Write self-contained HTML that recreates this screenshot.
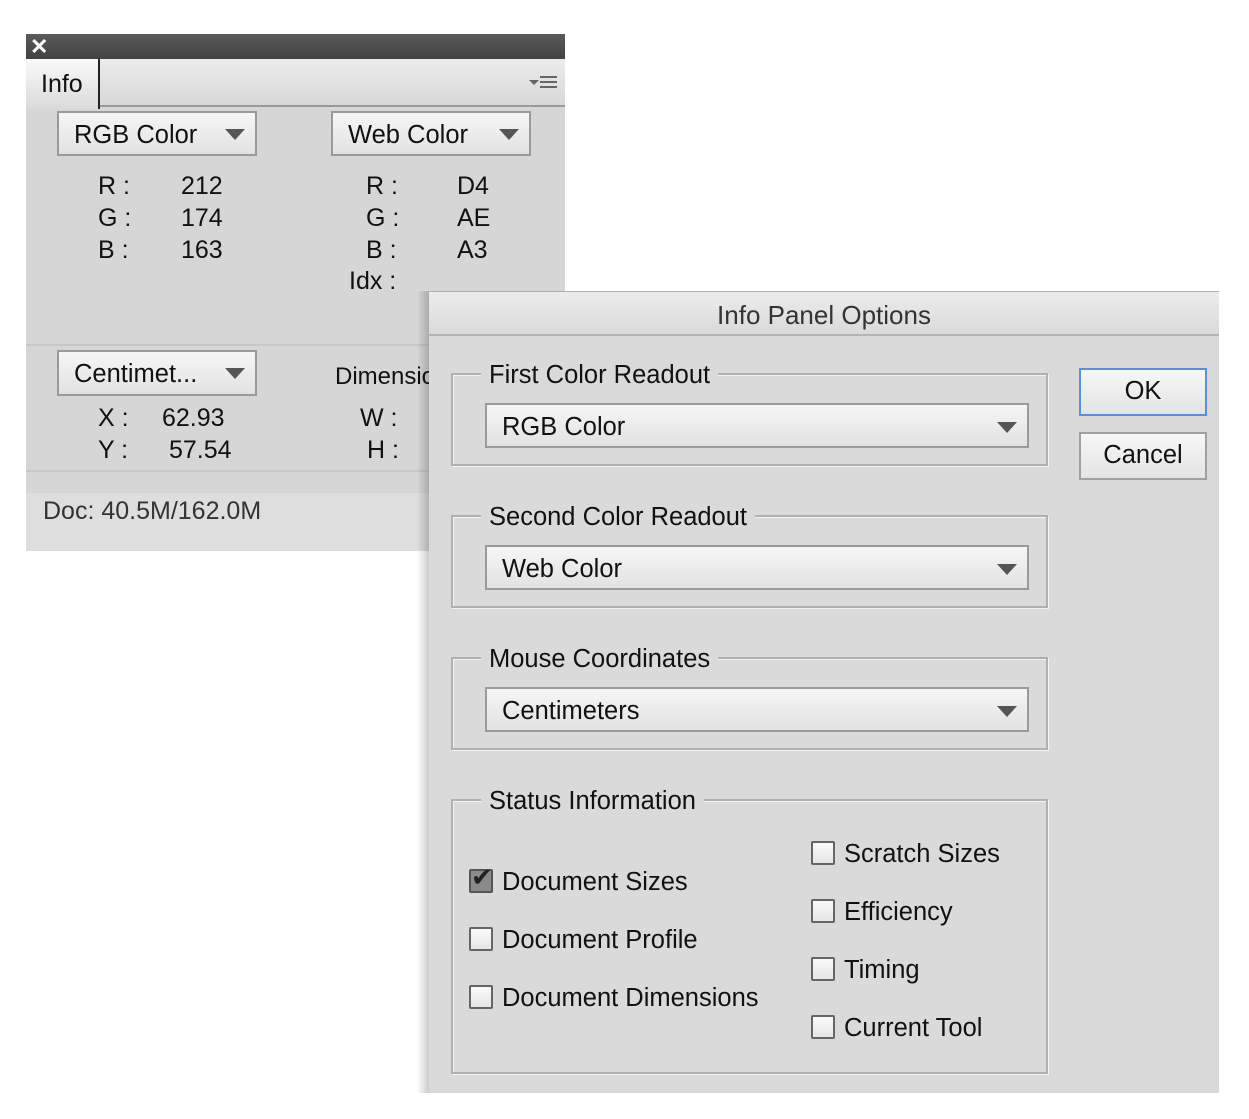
<!DOCTYPE html>
<html><head><meta charset="utf-8"><style>
*{margin:0;padding:0;box-sizing:border-box}
body{width:1249px;height:1119px;background:#fff;position:relative;overflow:hidden;font-family:"Liberation Sans",sans-serif;color:#111}
.a{position:absolute;white-space:nowrap}
.t{font-size:25px;line-height:28px}
.dd{position:absolute;border:2px solid #9a9a9a;background:linear-gradient(#f6f6f6,#e2e2e2)}
.dd span{position:absolute;left:15px;top:8px;font-size:25.5px;line-height:28px}
.tri{position:absolute;width:0;height:0;border-left:10px solid transparent;border-right:10px solid transparent;border-top:11px solid #555}
.grp{position:absolute;border:2px solid #b0b0b0;box-shadow:inset 1px 1px 0 #f4f4f4,1px 1px 0 #f4f4f4}
.gl{position:absolute;background:#dadada;padding:0 8px;font-size:25.5px;line-height:28px;top:-14px;left:28px}
.cb{position:absolute;width:24px;height:24px;border:2px solid #666;background:linear-gradient(#fafafa,#e6e6e6);border-radius:2px}
.btn{position:absolute;border:2px solid #a0a0a0;background:linear-gradient(#f7f7f7,#e4e4e4);font-size:25.5px;text-align:center;line-height:42px}
</style></head><body>
<!-- Info panel -->
<div class="a" style="left:26px;top:34px;width:539px;height:517px;background:#d6d6d6"></div>
<div class="a" style="left:26px;top:34px;width:539px;height:25px;background:linear-gradient(#5a5a5a,#424242)"></div>
<div class="a" style="left:30px;top:34px;color:#fff;font-size:22px;font-weight:bold">✕</div>
<div class="a" style="left:26px;top:59px;width:539px;height:48px;background:linear-gradient(#ececec,#d8d8d8);border-bottom:2px solid #9a9a9a"></div>
<div class="a" style="left:26px;top:59px;width:74px;height:50px;background:linear-gradient(#fafafa,#dadada);border-right:2px solid #222"></div>
<div class="a" style="left:41px;top:70px;font-size:25px">Info</div>
<div class="a" style="left:529px;top:80px;width:0;height:0;border-left:5px solid transparent;border-right:5px solid transparent;border-top:5px solid #666"></div>
<div class="a" style="left:540px;top:76px;width:17px;height:12px;border-top:2px solid #666;border-bottom:2px solid #666"><div style="margin-top:3px;height:2px;background:#666"></div></div>
<div class="dd" style="left:57px;top:111px;width:200px;height:45px"><span>RGB Color</span><div class="tri" style="left:166px;top:16px"></div></div>
<div class="dd" style="left:331px;top:111px;width:200px;height:45px"><span>Web Color</span><div class="tri" style="left:166px;top:16px"></div></div>
<div class="a t" style="left:98px;top:170px;line-height:32px">R :<br>G :<br>B :</div>
<div class="a t" style="left:181px;top:170px;line-height:32px">212<br>174<br>163</div>
<div class="a t" style="left:366px;top:170px;line-height:32px">R :<br>G :<br>B :</div>
<div class="a t" style="left:349px;top:267px">Idx :</div>
<div class="a t" style="left:457px;top:170px;line-height:32px">D4<br>AE<br>A3</div>
<div class="a" style="left:26px;top:344px;width:539px;height:2px;background:#c8c8c8"></div>
<div class="dd" style="left:57px;top:350px;width:200px;height:46px"><span>Centimet...</span><div class="tri" style="left:166px;top:16px"></div></div>
<div class="a t" style="left:335px;top:363px;font-size:24px">Dimensions</div>
<div class="a t" style="left:98px;top:402px;line-height:32px">X :<br>Y :</div>
<div class="a t" style="left:162px;top:402px;line-height:32px">62.93<br>&nbsp;57.54</div>
<div class="a t" style="left:360px;top:402px;line-height:32px">W :<br>&nbsp;H :</div>
<div class="a" style="left:26px;top:470px;width:539px;height:2px;background:#c8c8c8"></div>
<div class="a" style="left:26px;top:493px;width:539px;height:58px;background:#dedede"></div>
<div class="a t" style="left:43px;top:497px;color:#333">Doc: 40.5M/162.0M</div>
<!-- Dialog -->
<div class="a" style="left:417px;top:291px;width:12px;height:802px;background:linear-gradient(90deg,rgba(0,0,0,0),rgba(0,0,0,.2))"></div>
<div class="a" style="left:429px;top:291px;width:790px;height:802px;background:#dadada"></div>
<div class="a" style="left:429px;top:291px;width:790px;height:45px;background:linear-gradient(#ececec,#dadada);border-bottom:2px solid #b4b4b4;border-top:1px solid #c8a8a0"></div>
<div class="a" style="left:429px;top:300px;width:790px;text-align:center;font-size:26px;color:#333">Info Panel Options</div>

<div class="grp" style="left:451px;top:373px;width:597px;height:93px"><div class="gl">First Color Readout</div></div>
<div class="dd" style="left:485px;top:403px;width:544px;height:45px"><span>RGB Color</span><div class="tri" style="left:510px;top:17px"></div></div>
<div class="grp" style="left:451px;top:515px;width:597px;height:93px"><div class="gl">Second Color Readout</div></div>
<div class="dd" style="left:485px;top:545px;width:544px;height:45px"><span>Web Color</span><div class="tri" style="left:510px;top:17px"></div></div>
<div class="grp" style="left:451px;top:657px;width:597px;height:93px"><div class="gl">Mouse Coordinates</div></div>
<div class="dd" style="left:485px;top:687px;width:544px;height:45px"><span>Centimeters</span><div class="tri" style="left:510px;top:17px"></div></div>
<div class="grp" style="left:451px;top:799px;width:597px;height:275px"><div class="gl">Status Information</div></div>

<div class="cb" style="left:469px;top:869px;background:#8a8a8a;border-color:#555"></div>
<div class="a" style="left:471px;top:862px;font-size:26px;color:#222">✔</div>
<div class="a t" style="left:502px;top:868px;font-size:25.5px">Document Sizes</div>
<div class="cb" style="left:469px;top:927px"></div><div class="a t" style="left:502px;top:926px;font-size:25.5px">Document Profile</div>
<div class="cb" style="left:469px;top:985px"></div><div class="a t" style="left:502px;top:984px;font-size:25.5px">Document Dimensions</div>
<div class="cb" style="left:811px;top:841px"></div><div class="a t" style="left:844px;top:840px;font-size:25.5px">Scratch Sizes</div>
<div class="cb" style="left:811px;top:899px"></div><div class="a t" style="left:844px;top:898px;font-size:25.5px">Efficiency</div>
<div class="cb" style="left:811px;top:957px"></div><div class="a t" style="left:844px;top:956px;font-size:25.5px">Timing</div>
<div class="cb" style="left:811px;top:1015px"></div><div class="a t" style="left:844px;top:1014px;font-size:25.5px">Current Tool</div>

<div class="btn" style="left:1079px;top:368px;width:128px;height:48px;border-color:#5b8fd6">OK</div>
<div class="btn" style="left:1079px;top:432px;width:128px;height:48px">Cancel</div>
</body></html>
